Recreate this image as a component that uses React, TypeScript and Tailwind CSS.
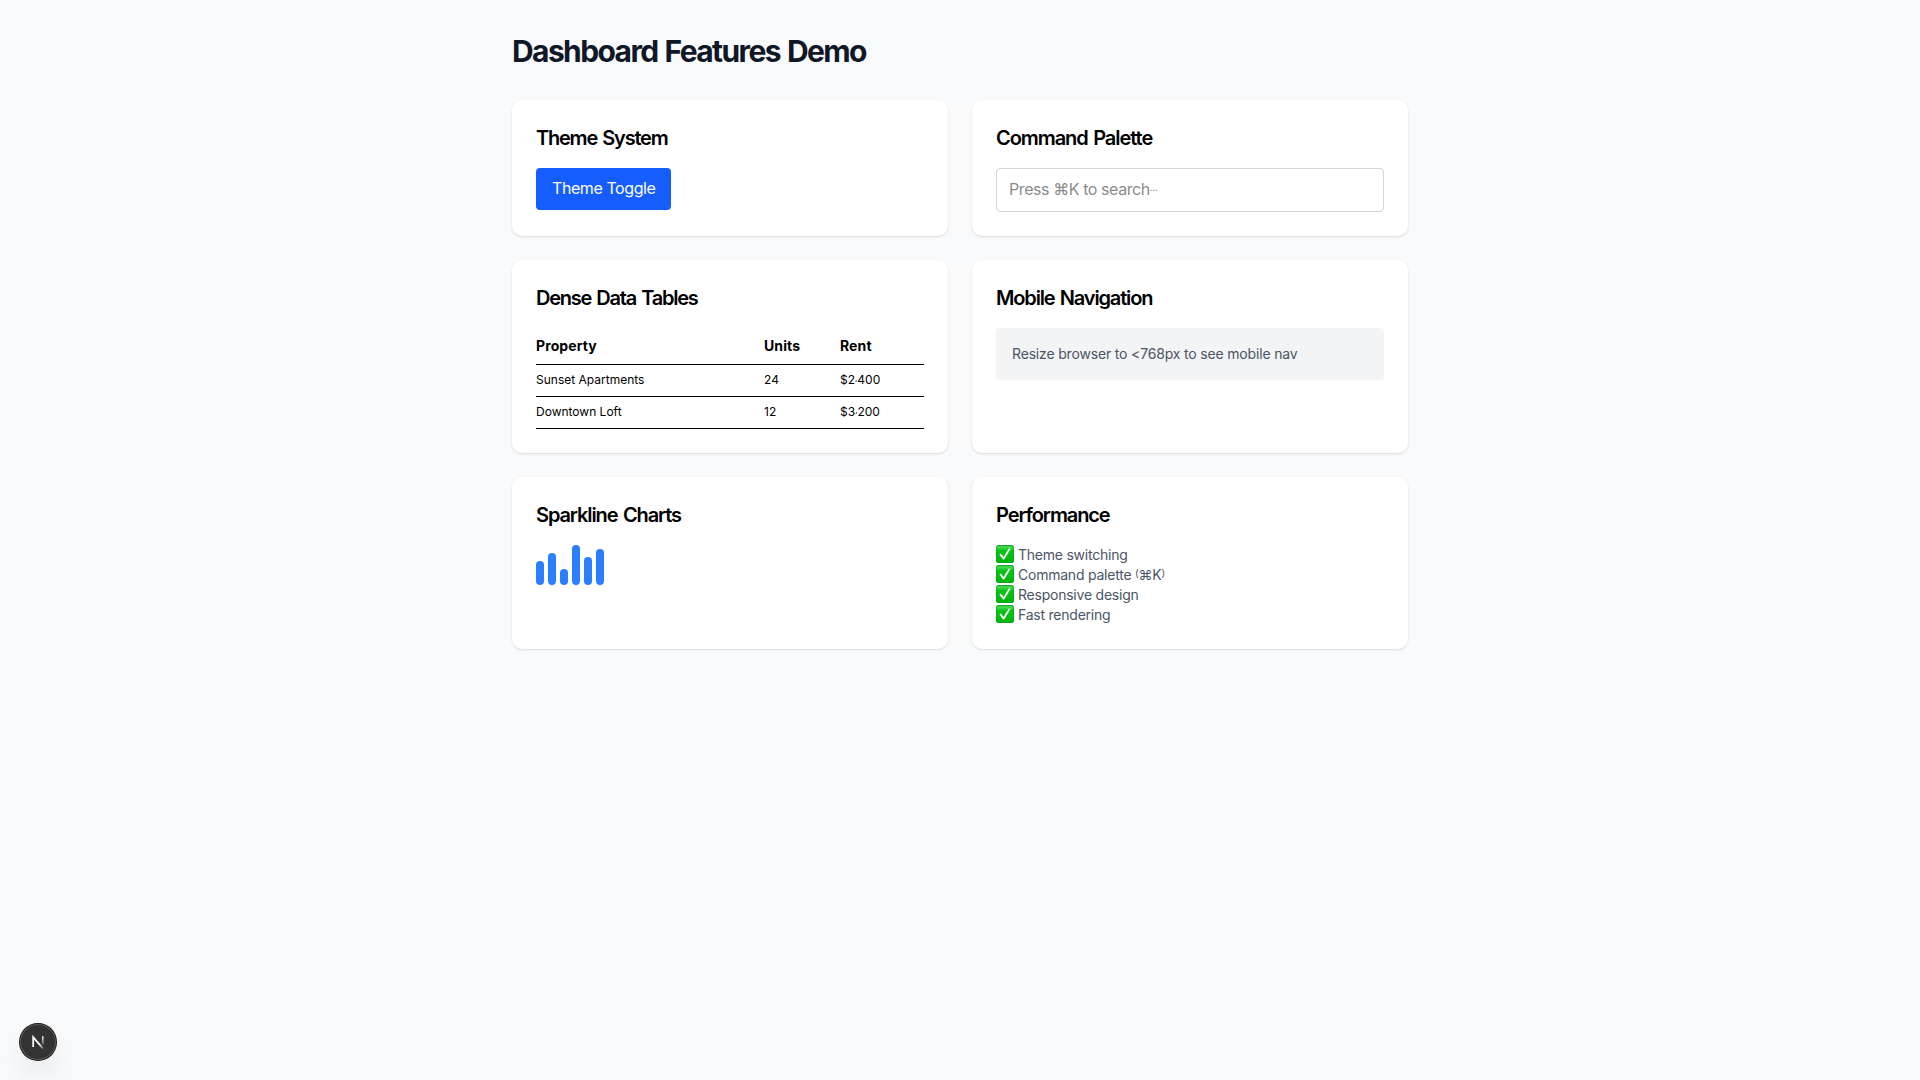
import type { ReactNode } from 'react';

function Card({ title, tracking, children }: { title: string; tracking: string; children: ReactNode }) {
  return (
    <section className="rounded-[10px] bg-white p-6 shadow-sm">
      <h2 className={`mb-4 text-xl font-semibold leading-7 text-black ${tracking}`}>{title}</h2>
      {children}
    </section>
  );
}

function Check() {
  return (
    <svg viewBox="0 0 18 18" className="mr-1 block h-[18px] w-[18px] shrink-0">
      <defs>
        <linearGradient id="check-green" x1="0" y1="0" x2="0" y2="1">
          <stop offset="0" stopColor="#08a51c" />
          <stop offset="0.1" stopColor="#4fdc56" />
          <stop offset="0.3" stopColor="#08c416" />
          <stop offset="1" stopColor="#00b50a" />
        </linearGradient>
      </defs>
      <rect width="18" height="18" rx="2.8" fill="url(#check-green)" />
      <rect x="0.4" y="0.4" width="17.2" height="17.2" rx="2.5" fill="none" stroke="#0a9f24" strokeWidth="0.8" opacity="0.75" />
      <path d="M3.4 9.6 4.9 8.6 7.5 11.9 12.8 3.4 14.6 3.8 8.2 14.6 7.1 14.6Z" fill="#fff" />
    </svg>
  );
}

const rows = [
  { name: 'Sunset Apartments', units: '24', rent: ['$2', '400'] },
  { name: 'Downtown Loft', units: '12', rent: ['$3', '200'] },
];

const bars = [24, 32, 16, 40, 28, 36];

const features: ReactNode[] = [
  'Theme switching',
  <>
    Command palette <span className="relative -top-[3px] text-[10px]">(</span>⌘K
    <span className="relative -top-[3px] text-[10px]">)</span>
  </>,
  'Responsive design',
  'Fast rendering',
];

export default function App() {
  return (
    <div className="min-h-screen bg-gray-50 p-8 font-['Inter',sans-serif] text-black antialiased">
      <main className="mx-auto max-w-4xl">
        <h1 className="mb-[31px] pt-px text-3xl leading-9 font-bold tracking-[-1.6px] [word-spacing:1.5px] text-gray-900">
          Dashboard Features Demo
        </h1>
        <div className="grid grid-cols-2 gap-6">
          <Card title="Theme System" tracking="tracking-[-1.22px] [word-spacing:1.5px]">
            <button className="block rounded bg-blue-600 px-4 py-2 text-base leading-[25.6px] tracking-[-0.42px] text-white">
              Theme Toggle
            </button>
          </Card>
          <Card title="Command Palette" tracking="tracking-[-1.06px] [word-spacing:1.5px]">
            <div className="h-11 rounded border border-gray-300 px-3 py-2 text-base leading-[25.6px] tracking-[-0.42px] text-[#8b8b8b]">
              Press ⌘K to search<span className="relative -top-[4px] text-[9px] leading-none">…</span>
            </div>
          </Card>
          <Card title="Dense Data Tables" tracking="tracking-[-1.25px] [word-spacing:1.5px]">
            <table className="w-full table-fixed border-collapse text-left">
              <colgroup>
                <col className="w-[228px]" />
                <col className="w-[76px]" />
                <col className="w-[84px]" />
              </colgroup>
              <thead>
                <tr className="border-b border-black text-sm tracking-[0.1px]">
                  <th className="py-2 font-bold">Property</th>
                  <th className="py-2 font-bold">Units</th>
                  <th className="py-2 font-bold">Rent</th>
                </tr>
              </thead>
              <tbody>
                {rows.map((r) => (
                  <tr key={r.name} className="h-8 border-b border-black text-xs leading-4">
                    <td className="pb-[2px]">{r.name}</td>
                    <td className="pb-[2px]">{r.units}</td>
                    <td className="pb-[2px]">
                      {r.rent[0]}
                      <span className="relative -top-[3px] text-[8px] leading-none">,</span>
                      {r.rent[1]}
                    </td>
                  </tr>
                ))}
              </tbody>
            </table>
          </Card>
          <Card title="Mobile Navigation" tracking="tracking-[-1.16px] [word-spacing:1.5px]">
            <div className="rounded bg-gray-100 p-4 text-sm leading-5 tracking-[-0.17px] text-gray-600">
              Resize browser to &lt;768px to see mobile nav
            </div>
          </Card>
          <Card title="Sparkline Charts" tracking="tracking-[-1.1px] [word-spacing:1.5px]">
            <div className="flex h-10 items-end gap-1">
              {bars.map((h, i) => (
                <div key={i} className="w-2 rounded bg-blue-500" style={{ height: h }} />
              ))}
            </div>
          </Card>
          <Card title="Performance" tracking="tracking-[-1.1px]">
            <ul className="text-sm leading-5 tracking-[-0.23px] text-gray-600">
              {features.map((f, i) => (
                <li key={i} className="flex h-5 items-start">
                  <Check />
                  <span>{f}</span>
                </li>
              ))}
            </ul>
          </Card>
        </div>
      </main>
      <div className="fixed bottom-5 left-5 flex size-9 items-center justify-center rounded-full bg-[#333] shadow-[0_0_0_1px_#171717,inset_0_0_0_1px_#5a5a5a,0_16px_32px_-8px_rgba(0,0,0,0.24)]">
        <svg viewBox="0 0 14 14" className="size-3.5" fill="none">
          <defs>
            <linearGradient id="n-stem" x1="0" y1="1" x2="0" y2="12" gradientUnits="userSpaceOnUse">
              <stop stopColor="#fff" />
              <stop offset="1" stopColor="#fff" stopOpacity="0" />
            </linearGradient>
            <linearGradient id="n-slash" x1="8" y1="9" x2="13" y2="15" gradientUnits="userSpaceOnUse">
              <stop stopColor="#fff" />
              <stop offset="1" stopColor="#fff" stopOpacity="0.1" />
            </linearGradient>
          </defs>
          <path d="M2.2 12V2.2L12 13.6" stroke="url(#n-slash)" strokeWidth="1.8" />
          <path d="M11.8 1.3V9.8" stroke="url(#n-stem)" strokeWidth="1.6" />
        </svg>
      </div>
    </div>
  );
}
